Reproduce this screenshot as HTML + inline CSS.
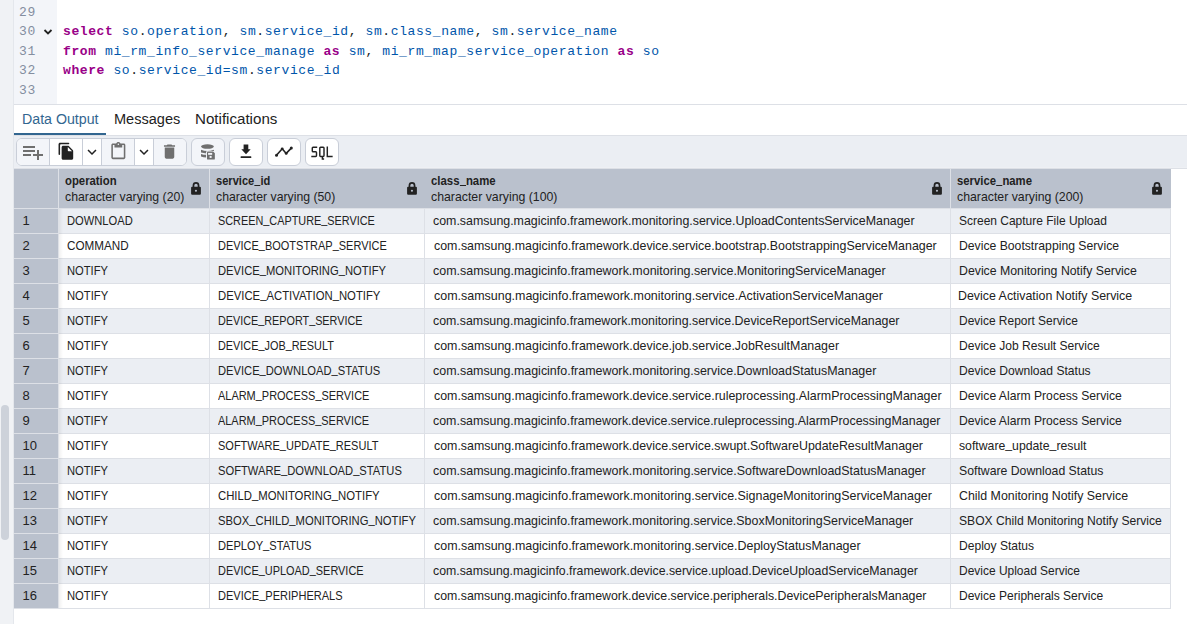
<!DOCTYPE html>
<html><head><meta charset="utf-8"><style>
*{box-sizing:border-box}
html,body{margin:0;padding:0}
body{width:1187px;height:624px;overflow:hidden;position:relative;background:#fff;font-family:"Liberation Sans",sans-serif;color:#222}
.ab{position:absolute}
.code{position:absolute;left:0;font-family:"Liberation Mono",monospace;font-size:13px;letter-spacing:0.6px;white-space:pre;line-height:19.5px;height:19.5px}
.ln{color:#848ea0;left:19px}
.kw{color:#990088;font-weight:bold}
.id{color:#0055aa}
.pu{color:#222}
.tx{position:absolute;white-space:nowrap;font-size:13px;line-height:16px;transform-origin:0 0}
.u{position:relative;top:-2px}
.hd{position:absolute;white-space:nowrap;font-size:13px;line-height:16px;transform-origin:0 0}
</style></head><body>

<div class="ab" style="left:0;top:0;width:13px;height:624px;background:#f0f2f5"></div>
<div class="ab" style="left:13px;top:0;width:1px;height:624px;background:#e4e7ec"></div>
<div class="ab" style="left:1px;top:405px;width:8px;height:135px;border-radius:4px;background:#cdd2da"></div>
<div class="ab" style="left:14px;top:0;width:43px;height:104px;background:#f3f5f9"></div>
<div class="ab" style="left:14px;top:104px;width:1173px;height:1px;background:#dde0e6"></div>
<div class="code ln" style="top:2.9px">29</div>
<div class="code ln" style="top:22.4px">30</div>
<div class="code ln" style="top:41.9px">31</div>
<div class="code ln" style="top:61.4px">32</div>
<div class="code ln" style="top:80.9px">33</div>
<svg class="ab" style="left:43px;top:28px" width="10" height="8" viewBox="0 0 10 8"><path d="M1.5 2 L5 5.5 L8.5 2" fill="none" stroke="#222" stroke-width="1.8"/></svg>
<div class="code" style="left:63px;top:22.4px"><span class="kw">select</span><span class="pu"> </span><span class="id">so</span><span class="pu">.</span><span class="id">operation</span><span class="pu">, </span><span class="id">sm</span><span class="pu">.</span><span class="id">service_id</span><span class="pu">, </span><span class="id">sm</span><span class="pu">.</span><span class="id">class_name</span><span class="pu">, </span><span class="id">sm</span><span class="pu">.</span><span class="id">service_name</span></div>
<div class="code" style="left:63px;top:41.9px"><span class="kw">from</span><span class="pu"> </span><span class="id">mi_rm_info_service_manage</span><span class="pu"> </span><span class="kw">as</span><span class="pu"> </span><span class="id">sm</span><span class="pu">, </span><span class="id">mi_rm_map_service_operation</span><span class="pu"> </span><span class="kw">as</span><span class="pu"> </span><span class="id">so</span></div>
<div class="code" style="left:63px;top:61.4px"><span class="kw">where</span><span class="pu"> </span><span class="id">so</span><span class="pu">.</span><span class="id">service_id</span><span class="id">=</span><span class="id">sm</span><span class="pu">.</span><span class="id">service_id</span></div>
<div class="ab" style="left:14px;top:105px;width:1173px;height:30px;background:#fff"></div>
<div class="ab" style="left:21.8px;top:110px;font-size:14px;line-height:18px;white-space:nowrap;color:#326690;transform:scaleX(1.0135);transform-origin:0 0">Data Output</div>
<div class="ab" style="left:113.8px;top:110px;font-size:14px;line-height:18px;white-space:nowrap;color:#222;transform:scaleX(1.0387);transform-origin:0 0">Messages</div>
<div class="ab" style="left:195.2px;top:110px;font-size:14px;line-height:18px;white-space:nowrap;color:#222;transform:scaleX(1.0800);transform-origin:0 0">Notifications</div>
<div class="ab" style="left:14px;top:133px;width:92px;height:2px;background:#326690"></div>
<div class="ab" style="left:14px;top:135px;width:1173px;height:1px;background:#dde0e6"></div>
<div class="ab" style="left:14px;top:136px;width:1173px;height:32px;background:#ebeef3"></div>
<div class="ab" style="left:14px;top:167px;width:1173px;height:1px;background:#eef0f4"></div>
<div class="ab" style="left:14px;top:168px;width:1173px;height:1px;background:#dde0e6"></div>
<div class="ab" style="left:16px;top:138px;width:171px;height:28px;border:1px solid #c9ced8;border-radius:6px;background:#fff;overflow:hidden"><div class="ab" style="left:0;top:0;width:32px;height:26px;background:#f3f5f9"></div><div class="ab" style="left:32px;top:0;width:1px;height:26px;background:#c9ced8"></div><div class="ab" style="left:65px;top:0;width:1px;height:26px;background:#c9ced8"></div><div class="ab" style="left:84px;top:0;width:1px;height:26px;background:#c9ced8"></div><div class="ab" style="left:85px;top:0;width:32px;height:26px;background:#f3f5f9"></div><div class="ab" style="left:117px;top:0;width:1px;height:26px;background:#c9ced8"></div><div class="ab" style="left:136px;top:0;width:1px;height:26px;background:#c9ced8"></div><div class="ab" style="left:137px;top:0;width:33px;height:26px;background:#f3f5f9"></div></div>
<div class="ab" style="left:191px;top:138px;width:34px;height:28px;border:1px solid #c9ced8;border-radius:6px;background:#f3f5f9"></div>
<div class="ab" style="left:229px;top:138px;width:34px;height:28px;border:1px solid #c9ced8;border-radius:6px;background:#fff"></div>
<div class="ab" style="left:267px;top:138px;width:34px;height:28px;border:1px solid #c9ced8;border-radius:6px;background:#fff"></div>
<div class="ab" style="left:305px;top:138px;width:34px;height:28px;border:1px solid #c9ced8;border-radius:6px;background:#fff"></div>
<svg class="ab" style="left:21px;top:140px" width="24" height="24" viewBox="0 0 24 24"><path fill="#6f6f6f" d="M14 10H2v2h12v-2zm0-4H2v2h12V6zm4 8v-4h-2v4h-4v2h4v4h2v-4h4v-2h-4zM2 16h8v-2H2v2z"/></svg>
<svg class="ab" style="left:56.8px;top:142.4px" width="18.5" height="18.5" viewBox="0 0 24 24"><path fill="#222" d="M15 1H4c-1.1 0-2 .9-2 2v13c0 .55.45 1 1 1s1-.45 1-1V4c0-.55.45-1 1-1h10c.55 0 1-.45 1-1s-.45-1-1-1zm.59 4.59l4.83 4.83c.37.37.58.88.58 1.41V21c0 1.1-.9 2-2 2H7.99C6.89 23 6 22.1 6 21l.01-14c0-1.1.89-2 1.99-2h6.17c.53 0 1.04.21 1.42.59zM15 12h4.5L14 6.5V11c0 .55.45 1 1 1z"/></svg>
<svg class="ab" style="left:82.7px;top:142.6px" width="18" height="18" viewBox="0 0 24 24"><path fill="#222" d="M7.41 8.59L12 13.17l4.59-4.58L18 10l-6 6-6-6 1.41-1.41z"/></svg>
<svg class="ab" style="left:135.0px;top:142.6px" width="18" height="18" viewBox="0 0 24 24"><path fill="#222" d="M7.41 8.59L12 13.17l4.59-4.58L18 10l-6 6-6-6 1.41-1.41z"/></svg>
<svg class="ab" style="left:108.7px;top:142px" width="18.7" height="18.7" viewBox="0 0 24 24"><path fill="#6f6f6f" d="M19 2h-4.18C14.4.84 13.3 0 12 0c-1.3 0-2.4.84-2.82 2H5c-1.1 0-2 .9-2 2v16c0 1.1.9 2 2 2h14c1.1 0 2-.9 2-2V4c0-1.1-.9-2-2-2zm-7 0c.55 0 1 .45 1 1s-.45 1-1 1-1-.45-1-1 .45-1 1-1zm7 18H5V4h2v3h10V4h2v16z"/></svg>
<svg class="ab" style="left:160.4px;top:141.9px" width="19" height="19" viewBox="0 0 24 24"><path fill="#6f6f6f" d="M6 19c0 1.1.9 2 2 2h8c1.1 0 2-.9 2-2V7H6v12zM19 4h-3.5l-1-1h-5l-1 1H5v2h14V4z"/></svg>
<svg class="ab" style="left:196px;top:140px" width="26" height="24" viewBox="0 0 26 24"><ellipse cx="11.45" cy="6.55" rx="6.45" ry="2.25" fill="#6f6f6f"/><path d="M5 9.7 Q11.45 12.2 17.9 9.7 V11.6 H10.6 V13.4 Q7.5 13.3 5 12.6Z" fill="#6f6f6f"/><path d="M5 13.9 Q7.6 14.7 10.3 14.8 V17.6 Q7.4 17.5 5 16.6Z" fill="#6f6f6f"/><rect x="10.2" y="11.0" width="9.5" height="9.4" rx="1.2" fill="#f3f5f9"/><path d="M11.9 11.5 H17.1 L18.85 13.2 V18.7 Q18.85 19.6 17.95 19.6 H11.9 Q11 19.6 11 18.7 V12.4 Q11 11.5 11.9 11.5Z" fill="#6f6f6f"/><rect x="12.1" y="12.9" width="4.1" height="1.9" fill="#f3f5f9"/><rect x="13.6" y="15.9" width="2" height="2" fill="#f3f5f9"/></svg>
<svg class="ab" style="left:236px;top:140px" width="20" height="20" viewBox="0 0 20 20"><path fill="#222" d="M7.6 4.4h4.7v4.8h2.4L10 14.2 5.3 9.2h2.3z"/><rect x="4.6" y="16.2" width="10.7" height="1.7" rx="0.5" fill="#222"/></svg>
<svg class="ab" style="left:270px;top:140px" width="26" height="20" viewBox="0 0 26 20"><polyline points="6.5,15.2 12.2,8.8 16.2,13.4 21.3,8.1" fill="none" stroke="#222" stroke-width="1.6" stroke-linejoin="round"/><circle cx="6.5" cy="15.2" r="1.5" fill="#222"/><circle cx="12.2" cy="8.8" r="1.4" fill="#222"/><circle cx="16.2" cy="13.4" r="1.4" fill="#222"/><circle cx="21.3" cy="8.1" r="1.5" fill="#222"/></svg>
<svg class="ab" style="left:305px;top:140px" width="34" height="22" viewBox="0 0 34 22"><path d="M12.2 7.3 H8.1 Q7.3 7.3 7.3 8.1 V11 Q7.3 11.8 8.1 11.8 H10.7 Q11.5 11.8 11.5 12.6 V15.6 Q11.5 16.4 10.7 16.4 H6.3" fill="none" stroke="#222" stroke-width="1.45"/><path d="M15.6 7.3 H18.2 Q19 7.3 19 8.1 V15.6 Q19 16.4 18.2 16.4 H15.6 Q14.8 16.4 14.8 15.6 V8.1 Q14.8 7.3 15.6 7.3Z M17.4 16.5 V18.9 H19.1" fill="none" stroke="#222" stroke-width="1.45"/><path d="M22.3 6.6 V16.4 H27.65" fill="none" stroke="#222" stroke-width="1.45"/></svg>
<div class="ab" style="left:14px;top:169px;width:1157px;height:39px;background:#bac1cd"></div>
<div class="ab" style="left:58px;top:209px;width:1112px;height:24px;background:#ebeef3"></div>
<div class="ab" style="left:14px;top:209px;width:44px;height:24px;background:#bac1cd"></div>
<div class="ab" style="left:58px;top:234px;width:1112px;height:24px;background:#fff"></div>
<div class="ab" style="left:14px;top:234px;width:44px;height:24px;background:#bac1cd"></div>
<div class="ab" style="left:58px;top:259px;width:1112px;height:24px;background:#ebeef3"></div>
<div class="ab" style="left:14px;top:259px;width:44px;height:24px;background:#bac1cd"></div>
<div class="ab" style="left:58px;top:284px;width:1112px;height:24px;background:#fff"></div>
<div class="ab" style="left:14px;top:284px;width:44px;height:24px;background:#bac1cd"></div>
<div class="ab" style="left:58px;top:309px;width:1112px;height:24px;background:#ebeef3"></div>
<div class="ab" style="left:14px;top:309px;width:44px;height:24px;background:#bac1cd"></div>
<div class="ab" style="left:58px;top:334px;width:1112px;height:24px;background:#fff"></div>
<div class="ab" style="left:14px;top:334px;width:44px;height:24px;background:#bac1cd"></div>
<div class="ab" style="left:58px;top:359px;width:1112px;height:24px;background:#ebeef3"></div>
<div class="ab" style="left:14px;top:359px;width:44px;height:24px;background:#bac1cd"></div>
<div class="ab" style="left:58px;top:384px;width:1112px;height:24px;background:#fff"></div>
<div class="ab" style="left:14px;top:384px;width:44px;height:24px;background:#bac1cd"></div>
<div class="ab" style="left:58px;top:409px;width:1112px;height:24px;background:#ebeef3"></div>
<div class="ab" style="left:14px;top:409px;width:44px;height:24px;background:#bac1cd"></div>
<div class="ab" style="left:58px;top:434px;width:1112px;height:24px;background:#fff"></div>
<div class="ab" style="left:14px;top:434px;width:44px;height:24px;background:#bac1cd"></div>
<div class="ab" style="left:58px;top:459px;width:1112px;height:24px;background:#ebeef3"></div>
<div class="ab" style="left:14px;top:459px;width:44px;height:24px;background:#bac1cd"></div>
<div class="ab" style="left:58px;top:484px;width:1112px;height:24px;background:#fff"></div>
<div class="ab" style="left:14px;top:484px;width:44px;height:24px;background:#bac1cd"></div>
<div class="ab" style="left:58px;top:509px;width:1112px;height:24px;background:#ebeef3"></div>
<div class="ab" style="left:14px;top:509px;width:44px;height:24px;background:#bac1cd"></div>
<div class="ab" style="left:58px;top:534px;width:1112px;height:24px;background:#fff"></div>
<div class="ab" style="left:14px;top:534px;width:44px;height:24px;background:#bac1cd"></div>
<div class="ab" style="left:58px;top:559px;width:1112px;height:24px;background:#ebeef3"></div>
<div class="ab" style="left:14px;top:559px;width:44px;height:24px;background:#bac1cd"></div>
<div class="ab" style="left:58px;top:584px;width:1112px;height:24px;background:#fff"></div>
<div class="ab" style="left:14px;top:584px;width:44px;height:24px;background:#bac1cd"></div>
<div class="ab" style="left:14px;top:208px;width:1156px;height:1px;background:#dde0e6"></div>
<div class="ab" style="left:14px;top:233px;width:1156px;height:1px;background:#dde0e6"></div>
<div class="ab" style="left:14px;top:258px;width:1156px;height:1px;background:#dde0e6"></div>
<div class="ab" style="left:14px;top:283px;width:1156px;height:1px;background:#dde0e6"></div>
<div class="ab" style="left:14px;top:308px;width:1156px;height:1px;background:#dde0e6"></div>
<div class="ab" style="left:14px;top:333px;width:1156px;height:1px;background:#dde0e6"></div>
<div class="ab" style="left:14px;top:358px;width:1156px;height:1px;background:#dde0e6"></div>
<div class="ab" style="left:14px;top:383px;width:1156px;height:1px;background:#dde0e6"></div>
<div class="ab" style="left:14px;top:408px;width:1156px;height:1px;background:#dde0e6"></div>
<div class="ab" style="left:14px;top:433px;width:1156px;height:1px;background:#dde0e6"></div>
<div class="ab" style="left:14px;top:458px;width:1156px;height:1px;background:#dde0e6"></div>
<div class="ab" style="left:14px;top:483px;width:1156px;height:1px;background:#dde0e6"></div>
<div class="ab" style="left:14px;top:508px;width:1156px;height:1px;background:#dde0e6"></div>
<div class="ab" style="left:14px;top:533px;width:1156px;height:1px;background:#dde0e6"></div>
<div class="ab" style="left:14px;top:558px;width:1156px;height:1px;background:#dde0e6"></div>
<div class="ab" style="left:14px;top:583px;width:1156px;height:1px;background:#dde0e6"></div>
<div class="ab" style="left:14px;top:608px;width:1156px;height:1px;background:#dde0e6"></div>
<div class="ab" style="left:58px;top:169px;width:1px;height:440px;background:#dde0e6"></div>
<div class="ab" style="left:209px;top:169px;width:1px;height:440px;background:#dde0e6"></div>
<div class="ab" style="left:950px;top:169px;width:1px;height:440px;background:#dde0e6"></div>
<div class="ab" style="left:424px;top:208px;width:1px;height:401px;background:#dde0e6"></div>
<div class="ab" style="left:1170px;top:208px;width:1px;height:401px;background:#dde0e6"></div>
<div class="ab" style="left:59px;top:209px;width:4px;height:399px;background:linear-gradient(to right,rgba(0,0,0,0.06),rgba(0,0,0,0))"></div>
<div class="hd" style="left:65.10px;top:173px;font-weight:bold;transform:scaleX(0.8712)">operation</div>
<div class="hd" style="left:65.10px;top:189.2px;transform:scaleX(0.9444)">character varying (20)</div>
<svg class="ab" style="left:188px;top:180px" width="14" height="16" viewBox="0 0 14 16"><path d="M5.45 7 V5.4 A2.55 2.55 0 0 1 10.55 5.4 V7" fill="none" stroke="#222" stroke-width="1.7"/><rect x="3.1" y="6.75" width="9.8" height="8" rx="1.1" fill="#222"/><circle cx="7.95" cy="10.8" r="1.05" fill="#bac1cd"/></svg>
<div class="hd" style="left:216.40px;top:173px;font-weight:bold;transform:scaleX(0.8524)">service<span style="display:inline-block;width:7.3px;height:1.4px;background:#222;position:relative;top:1.1px"></span>id</div>
<div class="hd" style="left:216.40px;top:189.2px;transform:scaleX(0.9429)">character varying (50)</div>
<svg class="ab" style="left:404px;top:180px" width="14" height="16" viewBox="0 0 14 16"><path d="M5.45 7 V5.4 A2.55 2.55 0 0 1 10.55 5.4 V7" fill="none" stroke="#222" stroke-width="1.7"/><rect x="3.1" y="6.75" width="9.8" height="8" rx="1.1" fill="#222"/><circle cx="7.95" cy="10.8" r="1.05" fill="#bac1cd"/></svg>
<div class="hd" style="left:431.20px;top:173px;font-weight:bold;transform:scaleX(0.8757)">class<span style="display:inline-block;width:7.3px;height:1.4px;background:#222;position:relative;top:1.1px"></span>name</div>
<div class="hd" style="left:431.20px;top:189.2px;transform:scaleX(0.9459)">character varying (100)</div>
<svg class="ab" style="left:929px;top:180px" width="14" height="16" viewBox="0 0 14 16"><path d="M5.45 7 V5.4 A2.55 2.55 0 0 1 10.55 5.4 V7" fill="none" stroke="#222" stroke-width="1.7"/><rect x="3.1" y="6.75" width="9.8" height="8" rx="1.1" fill="#222"/><circle cx="7.95" cy="10.8" r="1.05" fill="#bac1cd"/></svg>
<div class="hd" style="left:957.20px;top:173px;font-weight:bold;transform:scaleX(0.8709)">service<span style="display:inline-block;width:7.3px;height:1.4px;background:#222;position:relative;top:1.1px"></span>name</div>
<div class="hd" style="left:957.20px;top:189.2px;transform:scaleX(0.9459)">character varying (200)</div>
<svg class="ab" style="left:1149px;top:180px" width="14" height="16" viewBox="0 0 14 16"><path d="M5.45 7 V5.4 A2.55 2.55 0 0 1 10.55 5.4 V7" fill="none" stroke="#222" stroke-width="1.7"/><rect x="3.1" y="6.75" width="9.8" height="8" rx="1.1" fill="#222"/><circle cx="7.95" cy="10.8" r="1.05" fill="#bac1cd"/></svg>
<div class="tx" style="left:22.5px;top:213.2px">1</div>
<div class="tx" style="left:67.23px;top:213.2px;transform:scaleX(0.8580)">DOWNLOAD</div>
<div class="tx" style="left:217.85px;top:213.2px;transform:scaleX(0.8358)">SCREEN<span class="u">_</span>CAPTURE<span class="u">_</span>SERVICE</div>
<div class="tx" style="left:433.27px;top:213.2px;transform:scaleX(0.9536)">com.samsung.magicinfo.framework.monitoring.service.UploadContentsServiceManager</div>
<div class="tx" style="left:958.80px;top:213.2px;transform:scaleX(0.9217)">Screen Capture File Upload</div>
<div class="tx" style="left:22.5px;top:238.2px">2</div>
<div class="tx" style="left:67.38px;top:238.2px;transform:scaleX(0.8993)">COMMAND</div>
<div class="tx" style="left:217.65px;top:238.2px;transform:scaleX(0.8442)">DEVICE<span class="u">_</span>BOOTSTRAP<span class="u">_</span>SERVICE</div>
<div class="tx" style="left:434.01px;top:238.2px;transform:scaleX(0.9544)">com.samsung.magicinfo.framework.device.service.bootstrap.BootstrappingServiceManager</div>
<div class="tx" style="left:958.52px;top:238.2px;transform:scaleX(0.9383)">Device Bootstrapping Service</div>
<div class="tx" style="left:22.5px;top:263.2px">3</div>
<div class="tx" style="left:67.19px;top:263.2px;transform:scaleX(0.8592)">NOTIFY</div>
<div class="tx" style="left:217.72px;top:263.2px;transform:scaleX(0.8625)">DEVICE<span class="u">_</span>MONITORING<span class="u">_</span>NOTIFY</div>
<div class="tx" style="left:433.27px;top:263.2px;transform:scaleX(0.9580)">com.samsung.magicinfo.framework.monitoring.service.MonitoringServiceManager</div>
<div class="tx" style="left:958.63px;top:263.2px;transform:scaleX(0.9463)">Device Monitoring Notify Service</div>
<div class="tx" style="left:22.5px;top:288.2px">4</div>
<div class="tx" style="left:67.06px;top:288.2px;transform:scaleX(0.8645)">NOTIFY</div>
<div class="tx" style="left:217.59px;top:288.2px;transform:scaleX(0.8703)">DEVICE<span class="u">_</span>ACTIVATION<span class="u">_</span>NOTIFY</div>
<div class="tx" style="left:434.01px;top:288.2px;transform:scaleX(0.9589)">com.samsung.magicinfo.framework.monitoring.service.ActivationServiceManager</div>
<div class="tx" style="left:958.49px;top:288.2px;transform:scaleX(0.9529)">Device Activation Notify Service</div>
<div class="tx" style="left:22.5px;top:313.2px">5</div>
<div class="tx" style="left:67.19px;top:313.2px;transform:scaleX(0.8592)">NOTIFY</div>
<div class="tx" style="left:217.80px;top:313.2px;transform:scaleX(0.8317)">DEVICE<span class="u">_</span>REPORT<span class="u">_</span>SERVICE</div>
<div class="tx" style="left:433.27px;top:313.2px;transform:scaleX(0.9509)">com.samsung.magicinfo.framework.monitoring.service.DeviceReportServiceManager</div>
<div class="tx" style="left:958.69px;top:313.2px;transform:scaleX(0.9194)">Device Report Service</div>
<div class="tx" style="left:22.5px;top:338.2px">6</div>
<div class="tx" style="left:67.06px;top:338.2px;transform:scaleX(0.8645)">NOTIFY</div>
<div class="tx" style="left:217.68px;top:338.2px;transform:scaleX(0.8360)">DEVICE<span class="u">_</span>JOB<span class="u">_</span>RESULT</div>
<div class="tx" style="left:434.01px;top:338.2px;transform:scaleX(0.9550)">com.samsung.magicinfo.framework.device.job.service.JobResultManager</div>
<div class="tx" style="left:958.56px;top:338.2px;transform:scaleX(0.9275)">Device Job Result Service</div>
<div class="tx" style="left:22.5px;top:363.2px">7</div>
<div class="tx" style="left:67.19px;top:363.2px;transform:scaleX(0.8592)">NOTIFY</div>
<div class="tx" style="left:217.72px;top:363.2px;transform:scaleX(0.8590)">DEVICE<span class="u">_</span>DOWNLOAD<span class="u">_</span>STATUS</div>
<div class="tx" style="left:433.27px;top:363.2px;transform:scaleX(0.9572)">com.samsung.magicinfo.framework.monitoring.service.DownloadStatusManager</div>
<div class="tx" style="left:958.68px;top:363.2px;transform:scaleX(0.9295)">Device Download Status</div>
<div class="tx" style="left:22.5px;top:388.2px">8</div>
<div class="tx" style="left:67.06px;top:388.2px;transform:scaleX(0.8645)">NOTIFY</div>
<div class="tx" style="left:217.89px;top:388.2px;transform:scaleX(0.8424)">ALARM<span class="u">_</span>PROCESS<span class="u">_</span>SERVICE</div>
<div class="tx" style="left:434.01px;top:388.2px;transform:scaleX(0.9544)">com.samsung.magicinfo.framework.device.service.ruleprocessing.AlarmProcessingManager</div>
<div class="tx" style="left:958.53px;top:388.2px;transform:scaleX(0.9349)">Device Alarm Process Service</div>
<div class="tx" style="left:22.5px;top:413.2px">9</div>
<div class="tx" style="left:67.19px;top:413.2px;transform:scaleX(0.8592)">NOTIFY</div>
<div class="tx" style="left:218.02px;top:413.2px;transform:scaleX(0.8410)">ALARM<span class="u">_</span>PROCESS<span class="u">_</span>SERVICE</div>
<div class="tx" style="left:433.27px;top:413.2px;transform:scaleX(0.9543)">com.samsung.magicinfo.framework.device.service.ruleprocessing.AlarmProcessingManager</div>
<div class="tx" style="left:958.65px;top:413.2px;transform:scaleX(0.9346)">Device Alarm Process Service</div>
<div class="tx" style="left:22.5px;top:438.2px">10</div>
<div class="tx" style="left:67.06px;top:438.2px;transform:scaleX(0.8645)">NOTIFY</div>
<div class="tx" style="left:217.67px;top:438.2px;transform:scaleX(0.8453)">SOFTWARE<span class="u">_</span>UPDATE<span class="u">_</span>RESULT</div>
<div class="tx" style="left:434.01px;top:438.2px;transform:scaleX(0.9531)">com.samsung.magicinfo.framework.device.service.swupt.SoftwareUpdateResultManager</div>
<div class="tx" style="left:959.06px;top:438.2px;transform:scaleX(0.9420)">software<span class="u">_</span>update<span class="u">_</span>result</div>
<div class="tx" style="left:22.5px;top:463.2px">11</div>
<div class="tx" style="left:67.19px;top:463.2px;transform:scaleX(0.8592)">NOTIFY</div>
<div class="tx" style="left:217.79px;top:463.2px;transform:scaleX(0.8608)">SOFTWARE<span class="u">_</span>DOWNLOAD<span class="u">_</span>STATUS</div>
<div class="tx" style="left:433.27px;top:463.2px;transform:scaleX(0.9577)">com.samsung.magicinfo.framework.monitoring.service.SoftwareDownloadStatusManager</div>
<div class="tx" style="left:958.73px;top:463.2px;transform:scaleX(0.9421)">Software Download Status</div>
<div class="tx" style="left:22.5px;top:488.2px">12</div>
<div class="tx" style="left:67.06px;top:488.2px;transform:scaleX(0.8645)">NOTIFY</div>
<div class="tx" style="left:217.93px;top:488.2px;transform:scaleX(0.8717)">CHILD<span class="u">_</span>MONITORING<span class="u">_</span>NOTIFY</div>
<div class="tx" style="left:434.01px;top:488.2px;transform:scaleX(0.9570)">com.samsung.magicinfo.framework.monitoring.service.SignageMonitoringServiceManager</div>
<div class="tx" style="left:958.87px;top:488.2px;transform:scaleX(0.9513)">Child Monitoring Notify Service</div>
<div class="tx" style="left:22.5px;top:513.2px">13</div>
<div class="tx" style="left:67.19px;top:513.2px;transform:scaleX(0.8592)">NOTIFY</div>
<div class="tx" style="left:217.79px;top:513.2px;transform:scaleX(0.8653)">SBOX<span class="u">_</span>CHILD<span class="u">_</span>MONITORING<span class="u">_</span>NOTIFY</div>
<div class="tx" style="left:433.27px;top:513.2px;transform:scaleX(0.9563)">com.samsung.magicinfo.framework.monitoring.service.SboxMonitoringServiceManager</div>
<div class="tx" style="left:958.78px;top:513.2px;transform:scaleX(0.9328)">SBOX Child Monitoring Notify Service</div>
<div class="tx" style="left:22.5px;top:538.2px">14</div>
<div class="tx" style="left:67.06px;top:538.2px;transform:scaleX(0.8645)">NOTIFY</div>
<div class="tx" style="left:217.61px;top:538.2px;transform:scaleX(0.8552)">DEPLOY<span class="u">_</span>STATUS</div>
<div class="tx" style="left:434.01px;top:538.2px;transform:scaleX(0.9569)">com.samsung.magicinfo.framework.monitoring.service.DeployStatusManager</div>
<div class="tx" style="left:958.56px;top:538.2px;transform:scaleX(0.9279)">Deploy Status</div>
<div class="tx" style="left:22.5px;top:563.2px">15</div>
<div class="tx" style="left:67.19px;top:563.2px;transform:scaleX(0.8592)">NOTIFY</div>
<div class="tx" style="left:217.79px;top:563.2px;transform:scaleX(0.8406)">DEVICE<span class="u">_</span>UPLOAD<span class="u">_</span>SERVICE</div>
<div class="tx" style="left:433.27px;top:563.2px;transform:scaleX(0.9465)">com.samsung.magicinfo.framework.device.service.upload.DeviceUploadServiceManager</div>
<div class="tx" style="left:958.68px;top:563.2px;transform:scaleX(0.9200)">Device Upload Service</div>
<div class="tx" style="left:22.5px;top:588.2px">16</div>
<div class="tx" style="left:67.06px;top:588.2px;transform:scaleX(0.8645)">NOTIFY</div>
<div class="tx" style="left:217.63px;top:588.2px;transform:scaleX(0.8496)">DEVICE<span class="u">_</span>PERIPHERALS</div>
<div class="tx" style="left:434.01px;top:588.2px;transform:scaleX(0.9491)">com.samsung.magicinfo.framework.device.service.peripherals.DevicePeripheralsManager</div>
<div class="tx" style="left:958.56px;top:588.2px;transform:scaleX(0.9236)">Device Peripherals Service</div>
</body></html>
